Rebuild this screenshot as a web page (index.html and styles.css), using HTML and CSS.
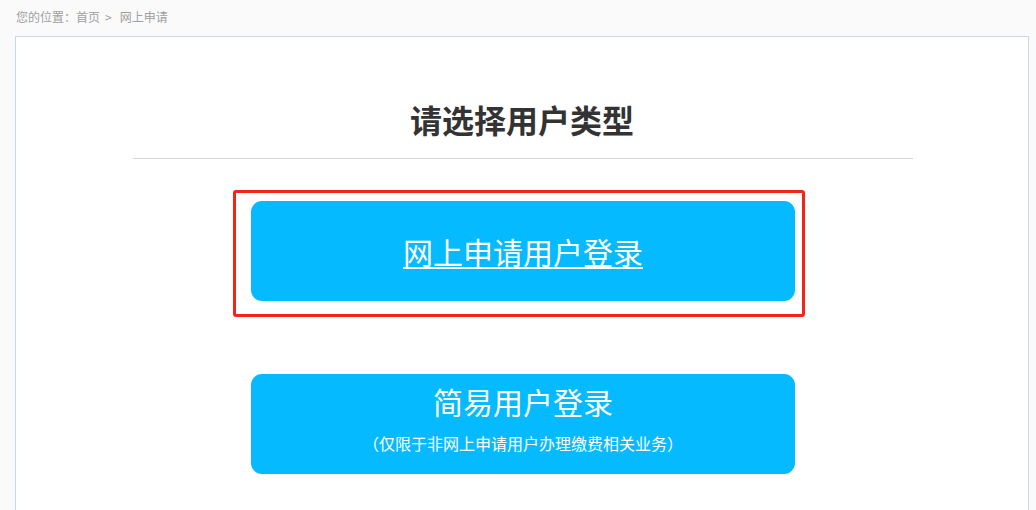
FILE: index.html
```html
<!DOCTYPE html>
<html lang="zh-CN">
<head>
<meta charset="utf-8">
<title>网上申请</title>
<link rel="stylesheet" href="styles.css">
</head>
<body>
<div class="crumb"><span class="crumb-label">您的位置：</span><a class="crumb-link" href="#">首页</a><span class="crumb-sep">&gt;</span><span class="crumb-cur">网上申请</span></div>
<div class="panel">
  <h1 class="title">请选择用户类型</h1>
  <div class="divider"></div>
  <div class="focus-box">
    <a class="btn btn-main" href="#">网上申请用户登录</a>
  </div>
  <a class="btn btn-simple" href="#">
    <span class="btn-title">简易用户登录</span>
    <span class="btn-sub">（仅限于非网上申请用户办理缴费相关业务）</span>
  </a>
</div>
</body>
</html>
```
FILE: styles.css
```css
html, body {
  margin: 0;
  padding: 0;
  height: 100%;
  overflow: hidden;
}
body {
  background: #fafafa;
  font-family: "Microsoft YaHei", "Noto Sans CJK SC", "Noto Sans", sans-serif;
  display: flex;
  flex-direction: column;
}
.crumb {
  flex: none;
  height: 36px;
  box-sizing: border-box;
  padding: 9px 0 0 16px;
  font-size: 12px;
  line-height: 16px;
  color: #a0a0a0;
}
.crumb-link {
  color: #a0a0a0;
  text-decoration: none;
}
.crumb-sep {
  margin: 0 8px 0 5px;
}
.panel {
  flex: 1 0 auto;
  margin: 0 0 -2px 15px;
  width: 1012px;
  border: 1px solid #cbd8ea;
  background: #fff;
  display: flex;
  flex-direction: column;
}
.title {
  margin: 60px 0 0;
  text-align: center;
  font-size: 32px;
  line-height: 44px;
  font-weight: bold;
  color: #333;
}
.divider {
  width: 780px;
  height: 1px;
  margin: 17px 0 0 117px;
  background: #d4d4d4;
}
.focus-box {
  margin: 31px 0 0 217px;
  width: 566px;
  height: 121px;
  border: 3px solid #f3251b;
  border-radius: 3px;
}
.btn {
  display: flex;
  flex-direction: column;
  align-items: center;
  justify-content: center;
  width: 544px;
  height: 100px;
  border-radius: 11px;
  background: #05baff;
  color: #fff;
}
.btn-main {
  margin: 8px 0 0 15px;
  font-size: 30px;
  line-height: 36px;
  text-decoration: underline;
  text-underline-offset: 3px;
  text-decoration-thickness: 2px;
}
.btn-simple {
  margin: 57px 0 0 235px;
  text-decoration: none;
  justify-content: flex-start;
  box-sizing: border-box;
  padding-top: 9px;
}
.btn-title {
  font-size: 30px;
  line-height: 36px;
}
.btn-sub {
  font-size: 16px;
  line-height: 22px;
  margin-top: 13px;
}
```
